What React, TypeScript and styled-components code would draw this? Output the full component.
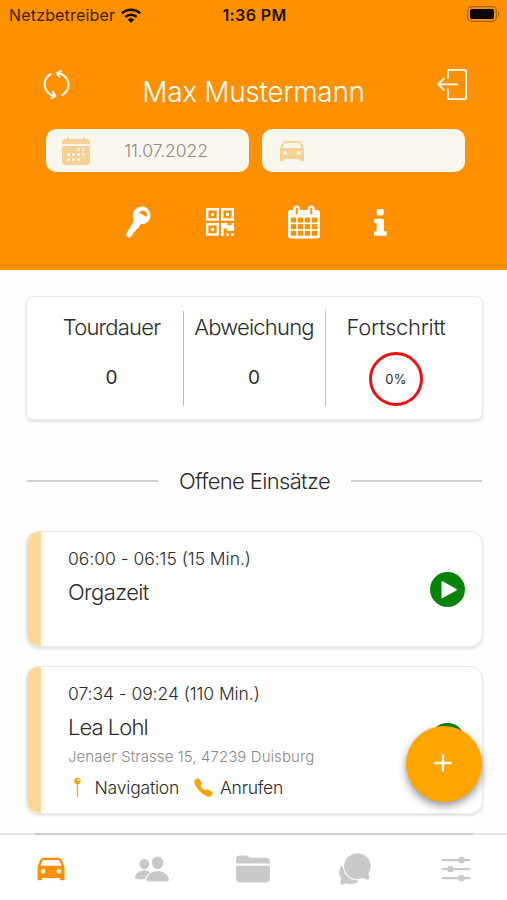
import React from 'react';
import styled, { createGlobalStyle, css } from 'styled-components';
import {
  IoCall,
  IoCar,
  IoCalendar,
  IoChatbubbles,
  IoFolder,
  IoOptions,
  IoPeople,
  IoPin,
} from 'react-icons/io5';
import { SlRefresh } from 'react-icons/sl';

const GlobalStyle = createGlobalStyle`
  *, *::before, *::after { box-sizing: border-box; }
  body { margin: 0; background: #fff; font-family: Inter, "Liberation Sans", sans-serif; color: #2b2b2b; }
  svg { display: block; flex: none; }
`;

const Screen = styled.div`
  position: relative;
  width: 507px;
  height: 900px;
  display: flex;
  flex-direction: column;
  overflow: hidden;
  background: #fefefe;
`;

const Header = styled.header`
  flex: none;
  height: 270px;
  background: #ff9000;
`;

const StatusBar = styled.div`
  display: grid;
  grid-template-columns: 1fr auto 1fr;
  align-items: center;
  height: 30px;
  padding: 0 7px 0 9px;
  color: #1f1300;
  line-height: 30px;
`;

const Carrier = styled.div`
  display: flex;
  align-items: center;
  gap: 6px;
  font-size: 16px;
  letter-spacing: 0.17px;
  color: #3a2303;
`;

const Clock = styled.div`
  font-size: 16px;
  font-weight: 600;
  letter-spacing: 0.4px;
`;

const Battery = styled.div`
  justify-self: end;
  margin-top: -2px;
`;

const TitleBar = styled.div`
  display: flex;
  align-items: center;
  justify-content: space-between;
  height: 98px;
  padding: 10px 39px 0 42px;
`;

const Title = styled.h1`
  margin: 15px 1px 0 0;
  font-size: 28px;
  font-weight: 300;
  line-height: 34px;
  letter-spacing: -0.32px;
  color: #fff;
`;

const Fields = styled.div`
  display: flex;
  gap: 13px;
  padding: 1px 42px 0 46px;
`;

const Field = styled.div`
  display: flex;
  align-items: center;
  flex: 1;
  height: 43px;
  padding: 0 14px;
  border-radius: 10px;
  background: #f9f6ed;
  color: #f5d193;
`;

const FieldValue = styled.span`
  flex: 1;
  padding-left: 5px;
  text-align: center;
  font-size: 17.5px;
  font-weight: 300;
  letter-spacing: -0.06px;
  color: #8f8c86;
`;

const Shortcuts = styled.nav`
  display: flex;
  justify-content: space-between;
  align-items: center;
  height: 36px;
  margin: 32px 120px 0 125px;
  color: #fff;
`;

const Content = styled.main`
  flex: 1;
  min-height: 0;
  padding: 27px 25px 0 27px;
  overflow: hidden;
`;

const cardFrame = css`
  background: #fff;
  box-shadow: 0 0 0 1px #e9e9e9, 0 2px 3px 1px rgba(0, 0, 0, 0.11);
`;

const StatsCard = styled.section`
  ${cardFrame}
  display: grid;
  grid-template-columns: 142px 142px 142px;
  height: 122px;
  padding: 14px 14px;
  border-radius: 6px;
`;

const Stat = styled.div`
  display: flex;
  flex-direction: column;
  align-items: center;
  height: 95px;
  padding-right: 1px;

  & + & {
    border-left: 1px solid #bcbcbc;
  }
`;

const StatLabel = styled.div<{ $tracking: number }>`
  font-size: 22px;
  font-weight: 300;
  line-height: 32px;
  letter-spacing: ${(p) => p.$tracking}px;
  white-space: nowrap;
`;

const StatValue = styled.div`
  margin-top: 22px;
  font-size: 19px;
  line-height: 26px;
`;

const ProgressRing = styled.div`
  display: flex;
  align-items: center;
  justify-content: center;
  width: 54px;
  height: 54px;
  margin-top: 9px;
  border: 3px solid #ee1111;
  border-radius: 50%;
  font-size: 13px;
  letter-spacing: 0.2px;
`;

const SectionHeading = styled.div`
  display: flex;
  align-items: center;
  gap: 21px;
  height: 32px;
  margin: 46px 0 35px;

  &::before,
  &::after {
    content: '';
    flex: 1;
    height: 2px;
    background: #cfcfcf;
  }
`;

const SectionTitle = styled.h2`
  margin: 0;
  font-size: 22px;
  font-weight: 300;
  letter-spacing: -0.65px;
`;

const VisitCard = styled.article<{ $height: number }>`
  ${cardFrame}
  display: flex;
  align-items: center;
  height: ${(p) => p.$height}px;
  margin-bottom: 21px;
  padding-right: 17px;
  border-radius: 12px;
  overflow: hidden;
`;

const Stripe = styled.div`
  align-self: stretch;
  width: 14px;
  background: #ffd899;
`;

const VisitBody = styled.div`
  flex: 1;
  align-self: stretch;
  padding: 14px 0 0 27px;
`;

const VisitTime = styled.div<{ $tracking: number }>`
  font-size: 17.5px;
  font-weight: 300;
  line-height: 26px;
  letter-spacing: ${(p) => p.$tracking}px;
`;

const VisitName = styled.div<{ $tracking: number }>`
  margin-top: 4px;
  font-size: 22px;
  font-weight: 300;
  line-height: 32px;
  letter-spacing: ${(p) => p.$tracking}px;
`;

const Address = styled.div`
  margin-top: 2px;
  font-size: 15px;
  font-weight: 300;
  line-height: 24px;
  letter-spacing: 0.08px;
  color: #898989;
`;

const Actions = styled.div`
  display: flex;
  align-items: center;
  height: 32px;
  margin: 2px 0 0 -1px;
  font-size: 17.5px;
  font-weight: 350;
  color: #ffa200;
`;

const ActionLabel = styled.span<{ $tracking: number; $after?: number }>`
  margin: 0 ${(p) => p.$after ?? 0}px 0 6.5px;
  color: #2b2b2b;
  letter-spacing: ${(p) => p.$tracking}px;
`;

const AddButton = styled.button`
  position: absolute;
  right: 25px;
  bottom: 98px;
  display: flex;
  align-items: center;
  justify-content: center;
  width: 76px;
  height: 76px;
  padding: 0 2px 2px 0;
  border: 0;
  border-radius: 50%;
  background: #ffa500;
  box-shadow: 0 4px 8px rgba(0, 0, 0, 0.42);
`;

const TabBar = styled.footer`
  position: relative;
  display: grid;
  grid-template-columns: repeat(5, 1fr);
  flex: none;
  height: 67px;
  border-top: 2px solid #e4e4e4;
  background: #fff;

  &::before {
    content: '';
    position: absolute;
    top: -2px;
    left: 35px;
    right: 34px;
    height: 2px;
    background: #cdcdcd;
  }
`;

const Tab = styled.div<{ $active?: boolean }>`
  display: flex;
  align-items: center;
  justify-content: center;
  padding: 3px 0 0 0;
  color: ${(p) => (p.$active ? '#ff9000' : '#c9c9c9')};
`;

const WifiIcon = () => (
  <svg width="20" height="15" viewBox="0 0 20 15" fill="none" stroke="#1a1000" strokeWidth="2.5">
    <path d="M.9 5.3C6.1.4 13.9.4 19.1 5.3" />
    <path d="M4.3 8.9c3.3-3 8.1-3 11.4 0" />
    <path d="M6.7 11.4c1.9-1.7 4.7-1.7 6.6 0L10 14.9z" fill="#1a1000" stroke="none" />
  </svg>
);

const BatteryIcon = () => (
  <svg width="33" height="16" viewBox="0 0 33 16">
    <rect x=".7" y=".7" width="28.6" height="14.6" rx="4" fill="none" stroke="#a86308" strokeWidth="1.3" />
    <rect x="3" y="3" width="24" height="10" rx="2" fill="#000" />
    <path d="M31 5.6c1.7.6 1.7 4.2 0 4.8z" fill="#a86308" />
  </svg>
);

const LogoutIcon = () => (
  <svg width="31" height="31" viewBox="0 0 31 31" fill="none" stroke="#fff" strokeWidth="1.8" strokeLinejoin="round" strokeLinecap="round">
    <path d="M10.9 9.2V2.6q0-1.7 1.7-1.7h14.8q1.7 0 1.7 1.7v25.8q0 1.7-1.7 1.7H12.6q-1.7 0-1.7-1.7v-8" />
    <path d="M20 15.3H1.4M7 9.5l-5.7 5.8L7 21" />
  </svg>
);

const KeyIcon = () => (
  <svg width="27" height="32" viewBox="0 0 27 32" fill="#fff" fillRule="evenodd">
    <path d="M8.4 6C10.2 2.3 13.6.2 17.4.5c5.2.4 8.6 4.900 7.900 9.900-.7 4.800-4.500 7.900-9.200 7.700l-1.500 1.300-1.100 2.600-2 .9-.8 2.100-1.800 1-.7 1.700-2.300 3c-1.100 1.200-3.200.8-4.200-.5-.7-.9-.6-2.100 0-3.200l7.200-12.500C7.600 11.800 7.400 8.600 8.400 6zM14.200 6.800c2-2.800 6.100-2.600 7.500.5.5 1.200.4 2.300-.1 3.500z" />
  </svg>
);

const FINDERS = [
  [0, 0],
  [15, 0],
  [0, 15],
];

const QrIcon = () => (
  <svg width="28" height="28" viewBox="0 0 28 28" fill="#fff">
    {FINDERS.map(([x, y]) => (
      <g key={`${x}-${y}`}>
        <rect x={x + 1.2} y={y + 1.2} width="10.6" height="10.3" fill="none" stroke="#fff" strokeWidth="2.4" />
        <rect x={x + 5} y={y + 4.9} width="3" height="3" />
      </g>
    ))}
    <path d="M15 15h6.5v2.300h4V15H28v8h-6.800v-2.600h-3.600V28H15z" />
    <rect x="20.2" y="25.3" width="2.6" height="2.6" />
    <rect x="25.3" y="25.3" width="2.6" height="2.6" />
  </svg>
);

const GRID_X = [2.8, 9.8, 16.8, 23.8];
const GRID_Y = [12.6, 19.2, 25.8];

const MonthIcon = () => (
  <svg width="32" height="34" viewBox="0 0 32 34">
    <path
      fill="#fff"
      d="M3 5h2.200V4c0-4.800 7-4.800 7 0v1h7.600V4c0-4.800 7-4.800 7 0v1H29q3 0 3 3v22.500q0 3-3 3H3q-3 0-3-3V8q0-3 3-3z"
    />
    <g fill="#ff9000">
      <rect x="7.7" y="2.6" width="2" height="7" rx="1" />
      <rect x="22.3" y="2.6" width="2" height="7" rx="1" />
      {GRID_Y.map((y) => GRID_X.map((x) => <rect key={`${x}-${y}`} x={x} y={y} width="5.3" height="5" />))}
    </g>
  </svg>
);

const InfoIcon = () => (
  <svg width="13" height="27" viewBox="0 0 13 27" fill="#fff">
    <rect x="2.7" y="0" width="7" height="6.4" rx="1.4" />
    <path d="M1.300 9.700h7.400q1.300 0 1.300 1.300v11.200h1.300q1.400 0 1.400 1.300v2q0 1.300-1.400 1.300h-10Q0 26.800 0 25.500v-2q0-1.300 1.300-1.300h1.400v-8H1.300Q0 14.200 0 12.900V11q0-1.300 1.300-1.300z" />
  </svg>
);

const PlayIcon = () => (
  <svg width="35" height="35" viewBox="0 0 35 35">
    <circle cx="17.5" cy="17.5" r="17.5" fill="#078307" />
    <path d="M12.300 10v15.400L26 17.700z" fill="#fff" stroke="#fff" strokeWidth="1.6" strokeLinejoin="round" />
  </svg>
);

const PlusIcon = () => (
  <svg width="18" height="18" viewBox="0 0 18 18" stroke="#fff" strokeWidth="2.3">
    <path d="M9 .5v17M.5 9h17" />
  </svg>
);

export default function App() {
  return (
    <Screen>
      <GlobalStyle />
      <Header>
        <StatusBar>
          <Carrier>
            Netzbetreiber
            <WifiIcon />
          </Carrier>
          <Clock>1:36 PM</Clock>
          <Battery>
            <BatteryIcon />
          </Battery>
        </StatusBar>
        <TitleBar>
          <SlRefresh size={29} color="#fff" stroke="#fff" strokeWidth={12} />
          <Title>Max Mustermann</Title>
          <LogoutIcon />
        </TitleBar>
        <Fields>
          <Field>
            <IoCalendar size={32} />
            <FieldValue>11.07.2022</FieldValue>
          </Field>
          <Field>
            <IoCar size={32} />
          </Field>
        </Fields>
        <Shortcuts>
          <KeyIcon />
          <QrIcon />
          <MonthIcon />
          <InfoIcon />
        </Shortcuts>
      </Header>

      <Content>
        <StatsCard>
          <Stat>
            <StatLabel $tracking={-0.8}>Tourdauer</StatLabel>
            <StatValue>0</StatValue>
          </Stat>
          <Stat>
            <StatLabel $tracking={-0.8}>Abweichung</StatLabel>
            <StatValue>0</StatValue>
          </Stat>
          <Stat>
            <StatLabel $tracking={-0.3}>Fortschritt</StatLabel>
            <ProgressRing>0%</ProgressRing>
          </Stat>
        </StatsCard>

        <SectionHeading>
          <SectionTitle>Offene Einsätze</SectionTitle>
        </SectionHeading>

        <VisitCard $height={114}>
          <Stripe />
          <VisitBody>
            <VisitTime $tracking={-0.03}>06:00 - 06:15 (15 Min.)</VisitTime>
            <VisitName $tracking={-0.6}>Orgazeit</VisitName>
          </VisitBody>
          <PlayIcon />
        </VisitCard>

        <VisitCard $height={146}>
          <Stripe />
          <VisitBody>
            <VisitTime $tracking={-0.07}>07:34 - 09:24 (110 Min.)</VisitTime>
            <VisitName $tracking={-0.95}>Lea Lohl</VisitName>
            <Address>Jenaer Strasse 15, 47239 Duisburg</Address>
            <Actions>
              <IoPin size={21} />
              <ActionLabel $tracking={-0.2} $after={13.5}>Navigation</ActionLabel>
              <IoCall size={21} />
              <ActionLabel $tracking={-0.25}>Anrufen</ActionLabel>
            </Actions>
          </VisitBody>
          <PlayIcon />
        </VisitCard>
      </Content>

      <AddButton aria-label="Hinzufügen">
        <PlusIcon />
      </AddButton>

      <TabBar>
        <Tab $active>
          <IoCar size={36} />
        </Tab>
        <Tab>
          <IoPeople size={36} />
        </Tab>
        <Tab>
          <IoFolder size={36} />
        </Tab>
        <Tab>
          <IoChatbubbles size={36} />
        </Tab>
        <Tab>
          <IoOptions size={36} />
        </Tab>
      </TabBar>
    </Screen>
  );
}
